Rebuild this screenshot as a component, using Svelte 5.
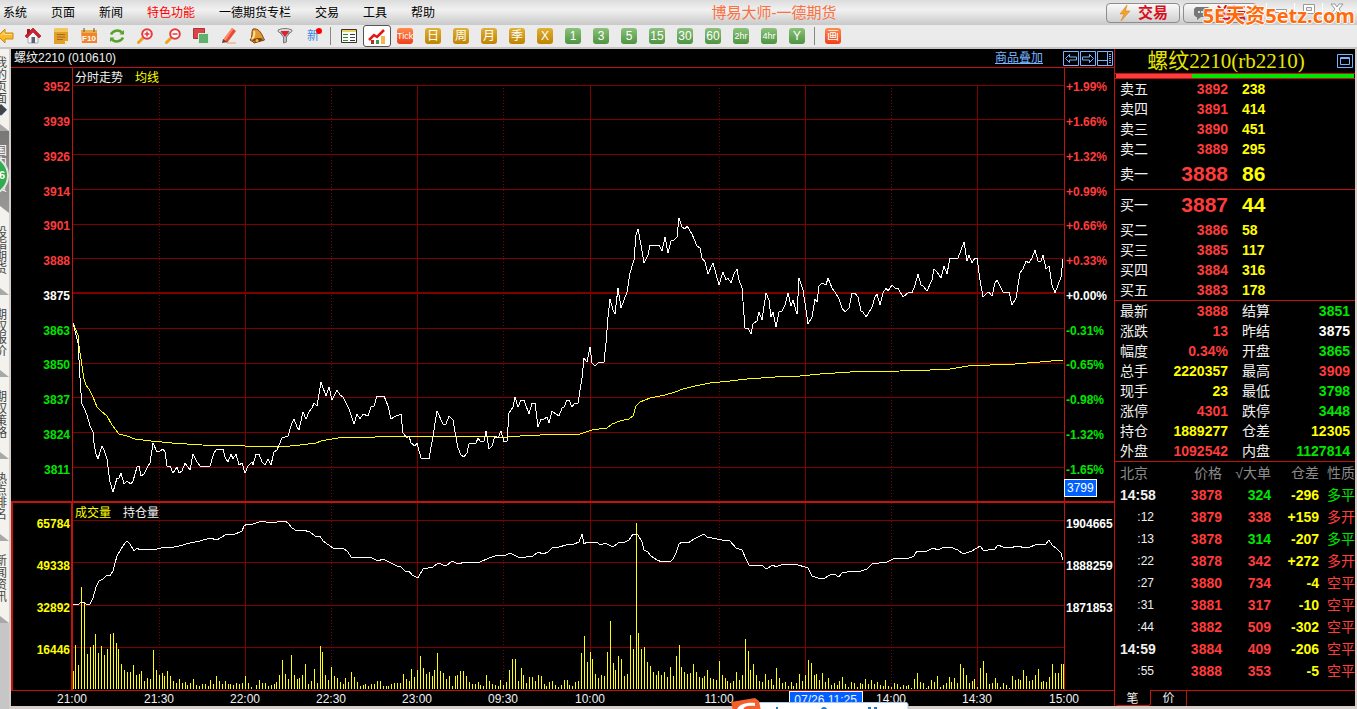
<script lang="ts">
  type Tone = 'up' | 'down' | 'vol' | 'flat';

  const menus = ['系统', '页面', '新闻', '特色功能', '一德期货专栏', '交易', '工具', '帮助'];
  const sideTabs = ['我的页面', '国内期货', '股指期货', '期权报价', '期权策略', '热点排名', '新闻资讯'];

  const tools = ['back', 'home', 'note', 'f10', 'refresh', 'zoomin', 'zoomout', 'layers', 'pen', 'bell', 'filter', 'new'];
  const periods = [
    { text: '日', kind: 'gold' },
    { text: '周', kind: 'gold' },
    { text: '月', kind: 'gold' },
    { text: '季', kind: 'gold' },
    { text: 'X', kind: 'gold' },
    { text: '1', kind: 'green' },
    { text: '3', kind: 'green' },
    { text: '5', kind: 'green' },
    { text: '15', kind: 'green' },
    { text: '30', kind: 'green' },
    { text: '60', kind: 'green' },
    { text: '2hr', kind: 'green small' },
    { text: '4hr', kind: 'green small' },
    { text: 'Y', kind: 'green' },
  ];

  const prices = ['3952', '3939', '3926', '3914', '3901', '3888', '3875', '3863', '3850', '3837', '3824', '3811'];
  const percents = ['+1.99%', '+1.66%', '+1.32%', '+0.99%', '+0.66%', '+0.33%', '+0.00%', '-0.31%', '-0.65%', '-0.98%', '-1.32%', '-1.65%'];
  const volumes = ['65784', '49338', '32892', '16446'];
  const interest = ['1904665', '1888259', '1871853', ''];

  function levelTone(i: number): Tone {
    return i < 6 ? 'up' : i > 6 ? 'down' : 'flat';
  }

  const rowLines = [85, 119, 154, 189, 224, 258, 328, 363, 397, 432, 467];
  const volLines = [520, 562, 605, 647];
  const hours = [245, 417, 590, 805, 977];
  const halves = [159, 331, 503, 719, 891];

  const left = 72;
  const span = 993;
  const times = [
    { x: 72, text: '21:00' },
    { x: 159, text: '21:30' },
    { x: 245, text: '22:00' },
    { x: 331, text: '22:30' },
    { x: 417, text: '23:00' },
    { x: 503, text: '09:30' },
    { x: 590, text: '10:00' },
    { x: 719, text: '11:00' },
    { x: 891, text: '14:00' },
    { x: 977, text: '14:30' },
    { x: 1064, text: '15:00' },
  ];

  const priceLine = `73,323 75,331 78,343 79,360 80,378 81,393 82,404 84,408 87,415 90,426 93,432 94,443 96,454 98,459 100,452
    102,446 104,450 107,459 108,467 110,482 113,492 117,478 119,478 121,473 124,484 127,481 131,484 133,481 137,467 139,466
    141,476 144,474 147,468 150,463 153,443 157,452 160,451 163,449 165,452 167,466 170,466 173,473 177,467 179,473 182,471
    185,463 190,470 193,454 197,462 201,467 210,466 214,453 217,449 223,449 225,457 228,462 231,454 233,459 236,454 239,465
    242,463 245,473 248,466 252,462 253,465 256,454 259,454 262,462 265,465 268,459 271,465 274,452 277,450 282,438 288,436
    292,423 294,419 297,427 299,430 303,412 306,419 309,412 312,408 314,403 317,406 321,382 326,396 329,387 332,400 337,390
    340,395 343,397 349,409 354,424 357,414 360,419 363,414 368,416 371,407 374,406 377,396 384,396 388,406 391,419 394,417
    401,414 403,433 407,438 409,436 411,443 415,446 417,443 421,458 423,459 426,458 429,459 433,436
    437,411 443,424 446,424 449,416 453,420 455,432 458,448 461,455 464,457 467,453 469,444 476,443 478,438 481,442 484,441
    486,431 489,449 492,446 495,436 498,438 501,431 504,442 507,441 509,413 513,407 515,397 518,407 521,400 524,400 529,414
    532,403 535,403 538,427 541,419 544,419 547,417 549,423 552,411 556,414 559,416 562,408 564,407 567,400 569,400 572,407
    575,403 578,403 582,378 584,358 587,362 590,347 592,363 595,366 598,363 604,362 606,343 608,317 610,299 613,310 615,314
    618,288 621,308 627,292 630,273 634,260 636,235 638,229 641,245 644,263 648,255 650,245 659,245 662,251 665,237 668,253
    671,241 674,240 677,237 679,218 682,227 685,229 687,226 692,234 697,246 700,248 702,258 705,262 708,274 713,263 719,285
    723,272 726,280 728,278 731,283 734,274 737,269 739,280 742,288 745,328 748,328 751,334 753,324 757,321 759,312 762,320
    766,293 769,300 771,317 773,312 776,327 779,312 782,311 785,305 788,293 791,306 793,300 797,314 799,278 803,290 805,303
    808,324 812,317 815,299 817,302 819,286 822,283 826,285 828,278 832,288 835,292 839,299 842,308 845,312 849,308 852,293
    855,293 858,297 861,311 863,312 866,317 868,314 872,307 875,297 877,294 880,305 883,293 886,288 888,291 892,285 895,288
    898,288 903,297 909,292 912,293 915,285 918,274 921,285 923,286 927,291 932,280 934,269 937,272 941,278 944,266 947,274
    950,258 958,258 961,250 964,242 967,261 969,255 972,263 975,258 977,258 980,280 983,297 987,293 989,292 992,296 995,283
    997,280 1003,292 1006,293 1009,292 1012,305 1016,298 1020,273 1023,269 1026,261 1029,263 1032,258 1035,250 1038,261
    1041,261 1043,255 1046,269 1049,266 1052,285 1055,293 1058,285 1061,277 1063,259`;

  const averageLine = `73,323 78,335 79,346 82,366 84,379 86,385 89,389 93,397 97,407 101,411 107,416 112,425 119,434 127,436
    135,439 151,441 172,443 202,445 245,446 290,446 300,445 316,443 321,441 332,439 345,437 375,437 400,436 425,436 430,437
    440,436 485,436 495,437 507,437 520,436 540,435 560,434 580,434 592,430 607,428 612,424 620,421 629,419 633,416 636,406
    640,402 650,398 665,395 675,392 683,389 695,386 710,383 730,381 747,379 775,377 800,376 820,374 850,372 900,371 930,370
    950,369 968,366 990,365 1015,364 1040,362 1063,360`;

  const interestLine = `73,605 75,604 78,605 81,602 84,602 87,605 90,604 93,598 96,587 99,581 103,579 107,575 110,576 113,571
    115,563 117,556 121,549 125,543 127,541 130,544 134,551 137,548 140,550 157,549 165,547 170,548 183,545 190,543 200,541
    210,538 217,540 227,534 233,535 242,531 244,526 247,524 253,524 262,521 270,523 285,521 288,523 292,528 297,531 303,530
    310,532 315,536 320,536 323,541 333,548 343,548 348,552 351,557 372,558 378,561 383,559 397,566 401,567 405,571 409,571
    412,575 418,578 423,569 428,568 433,567 438,563 446,566 452,561 458,564 465,562 480,562 489,558 498,555 506,555 510,553
    518,557 524,558 528,556 533,556 538,552 543,554 548,552 553,547 559,547 566,545 574,544 579,542 582,534 584,544 587,542
    596,542 601,545 605,543 613,547 618,543 625,542 629,540 633,534 638,535 642,542 644,550 648,552 651,556 657,560 662,562
    668,561 670,562 673,559 676,553 679,544 682,542 688,543 694,539 704,534 707,537 717,539 722,540 730,541 736,548 742,550
    746,559 749,565 762,565 766,569 773,565 776,567 783,564 795,564 808,568 812,576 818,578 823,579 830,575 834,574 839,577
    842,573 852,571 858,572 867,569 872,564 887,562 895,558 907,559 914,556 917,551 927,551 933,548 938,550 944,547 950,547
    958,550 963,554 972,551 980,546 984,551 988,550 995,549 998,545 1003,547 1011,548 1016,546 1027,548 1038,544 1046,544
    1049,540 1052,545 1057,549 1061,553 1063,560`;

  // one row per half hour, one value per minute
  const turnover = [
    [18, 44, 24, 102, 87, 35, 42, 44, 55, 36, 43, 34, 40, 55, 56, 46, 40, 25, 19, 17, 17, 24, 14, 15, 18, 8, 11, 10, 39, 19],
    [14, 16, 13, 18, 13, 8, 6, 10, 6, 7, 4, 6, 10, 4, 3, 5, 5, 3, 9, 5, 13, 8, 5, 8, 5, 5, 4, 6, 5, 6],
    [13, 6, 2, 0, 4, 9, 6, 6, 3, 4, 5, 7, 14, 29, 15, 10, 34, 14, 10, 11, 14, 25, 5, 8, 20, 6, 43, 37, 14, 9],
    [22, 13, 11, 7, 5, 11, 7, 17, 12, 7, 3, 4, 5, 3, 5, 5, 8, 8, 3, 3, 3, 5, 6, 6, 6, 15, 10, 8, 20, 12],
    [19, 33, 21, 15, 17, 13, 19, 36, 18, 16, 10, 13, 3, 13, 14, 18, 18, 13, 7, 5, 5, 7, 4, 3, 14, 8, 5, 4, 3, 9],
    [4, 7, 19, 30, 30, 8, 21, 14, 6, 12, 12, 8, 14, 13, 5, 3, 7, 8, 4, 2, 4, 9, 9, 4, 3, 7, 8, 36, 53, 27],
    [37, 30, 15, 11, 14, 13, 37, 68, 26, 19, 33, 30, 13, 15, 54, 40, 166, 56, 40, 42, 27, 23, 17, 14, 18, 14, 17, 12, 22, 13],
    [33, 44, 22, 17, 15, 16, 25, 17, 12, 11, 13, 19, 11, 10, 9, 28, 14, 11, 8, 6, 8, 17, 9, 14, 50, 38, 19, 25, 14, 8],
    [7, 15, 9, 10, 4, 21, 11, 6, 7, 3, 7, 3, 6, 15, 8, 14, 29, 26, 14, 15, 9, 16, 7, 11, 4, 6, 4, 8, 12, 5],
    [2, 7, 6, 2, 6, 5, 10, 5, 9, 5, 7, 4, 3, 9, 3, 2, 6, 5, 2, 4, 3, 4, 1, 10, 16, 7, 6, 1, 3, 9],
    [7, 13, 2, 4, 6, 12, 7, 11, 6, 25, 21, 14, 6, 8, 10, 2, 21, 28, 16, 5, 6, 11, 6, 2, 6, 4, 1, 13, 9, 10],
    [9, 19, 13, 8, 9, 14, 20, 7, 8, 7, 12, 25, 16, 16, 25, 25],
  ];
  const minute = 991 / 345;
  const bars = turnover.flatMap((row, r) =>
    row.map((h, i) => ({ x: Math.min(1063, Math.floor(73 + (r * 30 + i) * minute)), h }))
  );

  const asks = [
    ['卖五', '3892', '238'],
    ['卖四', '3891', '414'],
    ['卖三', '3890', '451'],
    ['卖二', '3889', '295'],
    ['卖一', '3888', '86'],
  ];
  const bids = [
    ['买一', '3887', '44'],
    ['买二', '3886', '58'],
    ['买三', '3885', '117'],
    ['买四', '3884', '316'],
    ['买五', '3883', '178'],
  ];

  const stats: [string, string, Tone, string, string, Tone][] = [
    ['最新', '3888', 'up', '结算', '3851', 'down'],
    ['涨跌', '13', 'up', '昨结', '3875', 'flat'],
    ['幅度', '0.34%', 'up', '开盘', '3865', 'down'],
    ['总手', '2220357', 'vol', '最高', '3909', 'up'],
    ['现手', '23', 'vol', '最低', '3798', 'down'],
    ['涨停', '4301', 'up', '跌停', '3448', 'down'],
    ['持仓', '1889277', 'vol', '仓差', '12305', 'vol'],
    ['外盘', '1092542', 'up', '内盘', '1127814', 'down'],
  ];

  const ticks: [string, string, string, string, string, Tone][] = [
    ['14:58', '3878', '324', '-296', '多平', 'down'],
    [':12', '3879', '338', '+159', '多开', 'up'],
    [':13', '3878', '314', '-207', '多平', 'down'],
    [':22', '3878', '342', '+272', '多开', 'up'],
    [':27', '3880', '734', '-4', '空平', 'up'],
    [':31', '3881', '317', '-10', '空平', 'up'],
    [':44', '3882', '509', '-302', '空平', 'up'],
    ['14:59', '3884', '409', '-206', '空平', 'up'],
    [':55', '3888', '353', '-5', '空平', 'up'],
  ];
</script>

{#snippet book(rows: string[][], label: string)}
  <table class="book" aria-label={label}>
    <tbody>
      {#each rows as [name, price, lots]}
        <tr class:best={name.endsWith('一')}>
          <th scope="row">{name}</th>
          <td class="up num">{price}</td>
          <td class="vol lots">{lots}</td>
        </tr>
      {/each}
    </tbody>
  </table>
{/snippet}

{#snippet toolIcon(name: string)}
  <svg width="16" height="16" viewBox="0 0 16 16" aria-hidden="true">
    {#if name === 'back'}
      <path d="M0 8 7 1v4h8v6H7v4z" fill="#fbb927" stroke="#c98a12" />
      <path d="M3 7.500 6 4.500v2h8" fill="none" stroke="#ffe08a" />
    {:else if name === 'home'}
      <path d="M3 8v7h10V8L8 3z" fill="#f4f4f6" stroke="#a9a9b4" />
      <path d="M0 8 8 0 16 8l-2 2-6-6-6 6z" fill="#d3202c" stroke="#8e1018" stroke-width=".6" />
      <path d="M2 1h3v3L2 7z" fill="#a51822" />
      <path d="M6.500 9h3.500v6H6.500z" fill="#5b6372" />
    {:else if name === 'note'}
      <path d="M2 0h13v13l-3 3H1V3z" fill="#e0a02c" />
      <path d="M2 0h13v4H1z" fill="#f3c65e" />
      <path d="M4 6.500h8M4 9h8M4 11.500h6" stroke="#a9681a" />
      <path d="m12 16 3-3h-3z" fill="#fff2c8" />
    {:else if name === 'f10'}
      <path d="M0 2h16v13H1z" fill="#f0832c" />
      <path d="M0 2h16v3H0z" fill="#e3b24a" />
      <path d="M3 0v4M13 0v4" stroke="#7b4a1a" />
      <text x="8" y="13" text-anchor="middle" font-size="8" font-weight="700" fill="#fff">F10</text>
    {:else if name === 'refresh'}
      <path d="M2 6.500C4 2 10 1.500 13 4.500" fill="none" stroke="#57a329" stroke-width="2.500" />
      <path d="M10.500 6.500H15V2z" fill="#57a329" />
      <path d="M14 9.500c-2 4.500-8 5-11 2" fill="none" stroke="#57a329" stroke-width="2.500" />
      <path d="M5.500 9.500H1V14z" fill="#57a329" />
    {:else if name === 'zoomin' || name === 'zoomout'}
      <path d="m6.500 9.500-5 5" stroke="#f0a020" stroke-width="3" stroke-linecap="round" />
      <circle cx="10" cy="6" r="4.800" fill="#fff" stroke="#e8393c" stroke-width="2" />
      <path d={name === 'zoomin' ? 'M7.500 6h5M10 3.500v5' : 'M7.500 6h5'} stroke="#e8393c" stroke-width="1.500" />
    {:else if name === 'layers'}
      <path d="M.5.500h11v10H.5z" fill="#dc4448" stroke="#a93236" />
      <path d="M5.500 5.500h10v10h-10z" fill="#62b070" stroke="#d8efda" />
    {:else if name === 'pen'}
      <path d="m2 12 9-12 4 3-9 12z" fill="#e84a34" />
      <path d="m2 12 9-12 1.500 1L4 13.500z" fill="#ff8a6a" />
      <path d="m1 15 1-4 4 3z" fill="#664032" />
      <path d="M6 15h9" stroke="#e8a060" />
    {:else if name === 'bell'}
      <path d="M4 1c5-1 8 3 10 8l1.500 3L5 15c-1-2-3-2-4-3C4 9 2 4 4 1z" fill="#e09a35" stroke="#7c4012" />
      <path d="M5 3c1 4 0 6-2 8" fill="none" stroke="#ffe08c" stroke-width="2" />
      <path d="M3 12c3-2 8-3 11-1-2 3-8 4-11 1z" fill="#7c4012" />
      <circle cx="8" cy="12.500" r="1.500" fill="#f8c040" />
    {:else if name === 'filter'}
      <path d="m1 2 5.500 7v6l3-1V9L15 2z" fill="#b9bcc2" stroke="#777b82" />
      <ellipse cx="8" cy="3" rx="7" ry="2.500" fill="#d8dadd" stroke="#777b82" />
      <path d="M3.500 3h9L8 9z" fill="#e32227" />
    {/if}
  </svg>
{/snippet}

<div class="app">
  <header class="menubar">
    <nav class="menus">
      {#each menus as item}
        <button class="menu" class:hot={item === '特色功能'}>{item}</button>
      {/each}
    </nav>
    <h1>博易大师-一德期货</h1>
    <div class="actions">
      <button class="action">
        <svg width="14" height="16" viewBox="0 0 14 16" aria-hidden="true">
          <path d="M9 0 2 9h4l-3 7 9-10H7.500z" fill="#f3a32c" stroke="#d07a14" stroke-width=".5" />
        </svg>
        交易
      </button>
      <button class="action">
        <svg width="16" height="14" viewBox="0 0 16 14" aria-hidden="true">
          <path d="M2 1h12l2 2v6l-2 2H7l-4 3v-3H2L0 9V3z" fill="#777" />
          <path d="M4 6h2M7 6h2M10 6h2" stroke="#ddd" stroke-width="2" />
        </svg>
        论坛
      </button>
      <div class="window-buttons">
        <button aria-label="最小化"><svg width="14" height="14" viewBox="0 0 14 14"><path d="M1.500 6.500h11v3h-11z" /></svg></button>
        <button aria-label="最大化"><svg width="14" height="14" viewBox="0 0 14 14"><path d="M1.500 1.500h11v9h-11zM4.500 4.500h5v3h-5z" /></svg></button>
        <button aria-label="关闭"><svg width="14" height="14" viewBox="0 0 14 14"><path d="M1 1h4l2 3 2-3h4L9 6l4 5H9L7 8l-2 3H1l4-5z" /></svg></button>
      </div>
    </div>
    <div class="watermark">5E天资5etz.com</div>
  </header>

  <div class="toolbar">
    {#each tools as name}
      <button class="tool" aria-label={name}>
        {#if name === 'new'}
          <span class="new">新</span>
        {:else}
          {@render toolIcon(name)}
        {/if}
      </button>
    {/each}
    <span class="sep"></span>
    <button class="tool" aria-label="报价">
      <svg width="16" height="16" viewBox="0 0 16 16">
        <path d="M.5 1.500h15v13H.5z" fill="#fffef4" stroke="#333" />
        <path d="M1 3h14" stroke="#f0d060" stroke-width="2" />
        <path d="M2 6.500h5M2 9.500h5M2 12.500h5" stroke="#2c8c3c" />
        <path d="M9 6.500h5M9 12.500h5" stroke="#333" />
        <path d="M9 9.500h5" stroke="#2846c0" />
      </svg>
    </button>
    <button class="tool active" aria-label="分时">
      <svg width="18" height="17" viewBox="0 0 18 17">
        <path d="M3 12h3v4H3z" fill="#b03028" />
        <path d="M8 12h3v4H8z" fill="#3a9850" />
        <path d="M13 8h4v8h-4z" fill="#f0b850" />
        <path d="m1 12 5-5 3 2 7-7" fill="none" stroke="#e01818" stroke-width="2.500" />
      </svg>
    </button>
    <button class="tool"><span class="chip red small">Tick</span></button>
    {#each periods as p}
      <button class="tool"><span class="chip {p.kind}">{p.text}</span></button>
    {/each}
    <span class="sep"></span>
    <button class="tool"><span class="chip red">画</span></button>
  </div>

  <div class="workspace">
    <aside class="side">
      {#each sideTabs as tab, i}
        <button class="side-tab" class:current={i === 1}><span>{tab}{i === 0 ? '◆' : ''}</span></button>
      {/each}
      <div class="badge">6</div>
    </aside>

    <main class="chart">
      <div class="chart-head">
        <span>螺纹2210 (010610)</span>
        <a href="#overlay">商品叠加</a>
        <div class="head-icons">
          <button aria-label="左移"><svg width="16" height="15" viewBox="0 0 16 15"><path d="M.5.500h15v14H.5zM2.500 7.500l4-4v2.500h7v3h-7v2.500z" /></svg></button>
          <button aria-label="右移"><svg width="16" height="15" viewBox="0 0 16 15"><path d="M.5.500h15v14H.5zM13.500 7.500l-4-4v2.500h-7v3h7v2.500z" /></svg></button>
          <button aria-label="布局"><svg width="16" height="15" viewBox="0 0 16 15"><path d="M.5.500h15v14H.5zM.5 9.500h10M10.500 1v13M12 3.500h2M12 5.500h2M12 7.500h2M12 9.500h2M12 11.500h2" /></svg></button>
        </div>
      </div>

      <section class="pane price-pane">
        <div class="scale levels">
          {#each prices as p, i}<span class={levelTone(i)}>{p}</span>{/each}
        </div>
        <div class="plot">
          <svg viewBox="72 68 993 433" preserveAspectRatio="none" shape-rendering="crispEdges">
            <g class="grid">
              {#each rowLines as y}<path d="M73 {y}.5H1064" />{/each}
              <path d="M73 293H1064" stroke-width="2" />
              {#each hours as x}<path d="M{x}.5 85V501" />{/each}
              {#each halves as x}<path d="M{x}.5 85V501" stroke-dasharray="1 2" />{/each}
            </g>
            <path class="frame" d="M72 68h1v433h-1zM1064 68h1v433h-1z" />
            <polyline class="average" points={averageLine} />
            <polyline class="line" points={priceLine} />
          </svg>
          <div class="legend"><span>分时走势</span><span class="vol">均线</span></div>
        </div>
        <div class="scale levels right">
          {#each percents as p, i}<span class={levelTone(i)}>{p}</span>{/each}
          <output class="tag">3799</output>
        </div>
      </section>

      <section class="pane volume-pane">
        <div class="scale volumes">
          {#each volumes as v}<span class="vol">{v}</span>{/each}
        </div>
        <div class="plot">
          <svg viewBox="72 503 993 187" preserveAspectRatio="none" shape-rendering="crispEdges">
            <g class="grid">
              {#each volLines as y}<path d="M73 {y}.5H1064" />{/each}
              {#each hours as x}<path d="M{x}.5 503V690" />{/each}
              {#each halves as x}<path d="M{x}.5 503V690" stroke-dasharray="1 2" />{/each}
            </g>
            <path class="frame" d="M72 503h1v187h-1zM1064 503h1v187h-1z" />
            {#each bars as b}<rect x={b.x} y={689 - b.h} width="1" height={b.h} fill="#ff0" />{/each}
            <polyline class="line" points={interestLine} />
          </svg>
          <div class="legend"><span class="vol">成交量</span><span>持仓量</span></div>
        </div>
        <div class="scale volumes right">
          {#each interest as v}<span class="flat">{v}</span>{/each}
        </div>
      </section>

      <div class="time-axis">
        <svg class="times">
          {#each times as t}
            <text x="{((t.x - left) / span) * 100}%" y="12" text-anchor="middle">{t.text}</text>
          {/each}
        </svg>
        <span class="cursor-time">07/26 11:25</span>
      </div>
    </main>

    <aside class="quote">
      <div class="quote-title">
        <h2>螺纹2210(rb2210)</h2>
        <button aria-label="窗口"><svg width="16" height="14" viewBox="0 0 16 14"><path d="M.5.500h15v13H.5z" /><path d="M3.500 3.500h9v7h-9zM3.500 4.500h9" /></svg></button>
      </div>
      <div class="ratio"><i></i></div>
      {@render book(asks, '卖盘')}
      {@render book(bids, '买盘')}
      <table class="stats">
        <tbody>
          {#each stats as [a, av, at, b, bv, bt]}
            <tr>
              <th scope="row">{a}</th>
              <td class="num {at}">{av}</td>
              <th scope="row" class="second">{b}</th>
              <td class="num {bt}">{bv}</td>
            </tr>
          {/each}
        </tbody>
      </table>
      <table class="ticks">
        <thead>
          <tr><th>北京</th><th>价格</th><th>√大单</th><th>仓差</th><th>性质</th></tr>
        </thead>
        <tbody>
          {#each ticks as [time, price, lots, diff, nature, tone]}
            <tr>
              <td class:second-only={time.startsWith(':')}>{time}</td>
              <td class="up">{price}</td>
              <td class={tone}>{lots}</td>
              <td class="vol">{diff}</td>
              <td class="nature {tone}">{nature}</td>
            </tr>
          {/each}
        </tbody>
      </table>
      <div class="quote-tabs">
        <button class="current">笔</button>
        <button>价</button>
      </div>
    </aside>
  </div>

  <div class="ime">
    <svg width="178" height="11" viewBox="0 0 178 11" aria-hidden="true">
      <path d="M27 4.500h148q2 0 2 2V12H27z" fill="#fff" stroke="#a9c8ee" />
      <path d="M0 4 24 0l4 3 2 10H2z" fill="#f4602c" />
      <path d="M6 12c1-5 8-8 18-7v3c-7-1-11 0-12 4z" fill="#fff" />
      <path d="M45 9h2v2h-2zM137 9h3v2h-3zM143 9h3v2h-3z" fill="#1878d0" />
      <circle cx="93" cy="12" r="3" fill="#1878d0" />
    </svg>
  </div>
</div>

<style>
  :global(body) {
    margin: 0;
    background: #d4cdc9;
  }
  .app {
    --frame: #c4120c;
    --grid: #800000;
    --red: #ff3c3c;
    --green: #00e600;
    --blue: #78b4ff;
    position: relative;
    display: flex;
    flex-direction: column;
    min-height: 100vh;
    overflow: hidden;
    font: 12px/16px 'Liberation Sans', 'Noto Sans CJK SC', sans-serif;
    color: #f0f0f0;
  }
  button {
    padding: 0;
    border: 0;
    background: none;
    font: inherit;
    color: inherit;
  }
  svg {
    display: block;
  }
  .up {
    color: var(--red);
  }
  .down {
    color: var(--green);
  }
  .vol {
    color: #ff0;
  }
  .flat {
    color: #fff;
  }

  .menubar {
    position: relative;
    display: grid;
    grid-template-columns: 1fr auto 1fr;
    align-items: center;
    height: 25px;
    background: linear-gradient(#dcdcdc, #f1f1f1 40%, #c9c9c9);
    color: #000;
  }
  .menus {
    display: flex;
    gap: 24px;
    padding-left: 3px;
  }
  .menu {
    white-space: nowrap;
  }
  .menu.hot {
    color: #f00;
  }
  h1 {
    margin: 0;
    padding-left: 191px;
    font-size: 15px;
    font-weight: 400;
    line-height: 24px;
    color: #fa7040;
  }
  .actions {
    display: flex;
    justify-content: flex-end;
    gap: 3px;
    padding-right: 7px;
  }
  .action {
    display: flex;
    justify-content: center;
    align-items: center;
    gap: 6px;
    width: 74px;
    height: 20px;
    border: 1px solid #8d8d8d;
    border-radius: 4px;
    background: linear-gradient(#fafafa, #cfcfcf);
    font-size: 15px;
    font-weight: 700;
    color: #d8101c;
  }
  .window-buttons {
    display: flex;
    margin-left: 6px;
  }
  .window-buttons button {
    width: 28px;
    padding: 0 0 6px 7px;
    border-left: 1px solid #fff;
  }
  .window-buttons path {
    fill: #fff;
    fill-rule: evenodd;
    stroke: #999;
  }
  .watermark {
    position: absolute;
    top: 3px;
    right: 2px;
    font: 700 20px/26px 'Open Sans', 'Noto Sans CJK SC', sans-serif;
    color: #ff6a0a;
    text-shadow: 1px 0 #fff, -1px 0 #fff, 0 1px #fff, 0 -1px #fff;
  }

  .toolbar {
    display: flex;
    align-items: center;
    box-sizing: border-box;
    height: 24px;
    padding-right: 8px;
    border-bottom: 2px solid #cbc4c4;
    background: #ebebeb;
  }
  .tool {
    display: flex;
    justify-content: center;
    align-items: center;
    flex: none;
    width: 28px;
    height: 22px;
  }
  .tool:first-child {
    justify-content: flex-start;
    width: 19px;
    overflow: hidden;
  }
  .tool:first-child svg {
    margin-left: -2px;
  }
  .tool.active {
    box-sizing: border-box;
    border: 1px solid #555;
    border-radius: 3px;
    background: #fff;
  }
  .sep {
    box-sizing: border-box;
    width: 8px;
    height: 18px;
    border-left: 3px solid #ebebeb;
    background: linear-gradient(90deg, #888 1px, transparent 1px);
  }
  .new {
    position: relative;
    color: #3c8ae6;
  }
  .new::after {
    content: '';
    position: absolute;
    top: 0;
    right: -3px;
    width: 6px;
    height: 6px;
    border-radius: 50%;
    background: #f00;
  }
  .chip {
    width: 16px;
    height: 16px;
    border-radius: 3px;
    line-height: 16px;
    text-align: center;
    color: #fff;
    overflow: hidden;
  }
  .chip.gold {
    background: linear-gradient(#dfb136, #bf8300);
  }
  .chip.green {
    background: linear-gradient(#8cc27c, #4d9440);
  }
  .chip.red {
    background: linear-gradient(#ff8a4c, #f0401c);
  }
  .chip.small {
    font-size: 9px;
  }

  .workspace {
    display: flex;
    flex: 1;
    padding-right: 2px;
  }
  .side {
    position: relative;
    flex: none;
    width: 9px;
    border-right: 2px solid #d5cdc9;
    background: #c6c6c6;
    overflow: hidden;
  }
  .side-tab {
    position: relative;
    display: flex;
    align-items: center;
    width: 9px;
    height: 82px;
    background: #f3f2ec;
    color: #444;
  }
  .side-tab::after {
    content: '';
    position: absolute;
    left: 0;
    bottom: 0;
    width: 9px;
    height: 7px;
    background: #a8a8a8;
    clip-path: polygon(0 0, 100% 100%, 0 100%);
  }
  .side-tab span {
    width: 12px;
    margin: 0 0 6px -5px;
    flex: none;
    line-height: 12px;
    word-break: break-all;
  }
  .side-tab.current {
    background: linear-gradient(#777, #999);
    color: #fff;
  }
  .side-tab.current::after {
    background: #f3f2ec;
  }
  .badge {
    position: absolute;
    top: 106px;
    left: -32px;
    box-sizing: border-box;
    width: 41px;
    height: 41px;
    border: 2px solid #e4e4e4;
    border-radius: 50%;
    background: #32ac50;
    font-weight: 700;
    font-size: 11px;
    line-height: 37px;
    text-align: right;
    color: #fff;
    padding-right: 2px;
  }

  .chart {
    display: flex;
    flex-direction: column;
    flex: 1;
    min-width: 0;
    margin-bottom: 3px;
    background: #000;
  }
  .chart-head {
    display: flex;
    align-items: center;
    gap: 20px;
    height: 18px;
    padding-left: 3px;
    border-bottom: 1px solid var(--frame);
  }
  .chart-head a {
    margin-left: auto;
    color: var(--blue);
  }
  .head-icons {
    display: flex;
    gap: 1px;
    padding-right: 1px;
  }
  .head-icons path,
  .quote-title path {
    fill: none;
    stroke: var(--blue);
  }
  .pane {
    display: grid;
    grid-template-columns: 61px minmax(0, 1fr) 49px;
  }
  .price-pane {
    flex: 433;
  }
  .volume-pane {
    flex: 187;
    border: solid var(--frame);
    border-width: 2px 0 1px;
    background: linear-gradient(var(--frame), var(--frame)) 0 0 / 2px 100% no-repeat;
  }
  .plot {
    position: relative;
    min-height: 0;
  }
  .plot svg {
    position: absolute;
    inset: 0;
    width: 100%;
    height: 100%;
  }
  .grid path {
    stroke: var(--grid);
  }
  .frame {
    fill: var(--frame);
  }
  .line,
  .average {
    fill: none;
    stroke: #fff;
  }
  .average {
    stroke: #ff0;
  }
  .legend {
    position: absolute;
    top: 2px;
    left: 3px;
    display: flex;
    gap: 12px;
  }
  .scale {
    position: relative;
    display: grid;
    grid-auto-rows: 1fr;
    align-items: center;
    padding-right: 2px;
    font-weight: 700;
    text-align: right;
  }
  .scale.right {
    padding-right: 0;
    padding-left: 1px;
    text-align: left;
  }
  .levels {
    padding-top: 2px;
    padding-bottom: 14px;
  }
  .volumes {
    padding-bottom: 19px;
  }
  .volume-pane .scale:first-child {
    border-right: 1px solid var(--frame);
    padding-right: 1px;
  }
  .tag {
    position: absolute;
    left: -1px;
    bottom: 4px;
    padding: 0 2px;
    border: 1px solid #fff;
    background: #0060ff;
    font-weight: 400;
    color: #fff;
  }
  .time-axis {
    position: relative;
    height: 15px;
    padding: 0 49px 0 61px;
  }
  .times {
    width: 100%;
    height: 15px;
    overflow: visible;
    fill: #f0f0f0;
  }
  .cursor-time {
    position: absolute;
    left: 70.500%;
    top: 0;
    box-sizing: border-box;
    width: 74px;
    height: 15px;
    border: 1px solid #fff;
    background: #0060ff;
    text-align: center;
    white-space: nowrap;
    overflow: hidden;
  }

  .quote {
    display: flex;
    flex-direction: column;
    flex: none;
    width: 240px;
    margin-bottom: 3px;
    border-left: 1px solid var(--frame);
    background: #000;
    font-size: 14px;
  }
  .quote-title {
    display: flex;
    align-items: center;
    height: 24px;
    padding-right: 2px;
    border-bottom: 1px solid var(--frame);
  }
  h2 {
    flex: 1;
    margin: 0;
    font: 400 21px/24px 'Liberation Serif', 'Noto Sans CJK SC', serif;
    text-align: center;
    color: #e6e600;
  }
  .ratio {
    height: 4px;
    padding: 0 1px;
    border-bottom: 1px solid var(--frame);
    background: var(--green) content-box;
  }
  .ratio i {
    display: block;
    width: 32%;
    height: 4px;
    background: var(--red);
  }
  table {
    width: 100%;
    table-layout: fixed;
    border-collapse: separate;
    border-spacing: 0;
  }
  th,
  td {
    padding: 0;
    line-height: 20px;
    font-weight: 700;
    white-space: nowrap;
  }
  th {
    width: 40px;
    box-sizing: border-box;
    padding-left: 5px;
    font-weight: 400;
    text-align: left;
  }
  .num {
    width: 73px;
    text-align: right;
  }
  .book,
  .stats {
    border-bottom: 1px solid var(--frame);
  }
  .lots {
    padding-left: 14px;
  }
  .best td {
    font-size: 21px;
    line-height: 30px;
  }
  .stats th.second {
    width: 54px;
    padding-left: 14px;
  }
  .stats td:last-child {
    width: auto;
    padding-right: 5px;
  }
  .ticks th,
  .ticks td {
    box-sizing: border-box;
    line-height: 22px;
    text-align: right;
  }
  .ticks th {
    padding-left: 0;
    color: #8a8a8a;
  }
  .ticks th:first-child,
  .ticks td:first-child {
    width: 45px;
    padding-left: 5px;
    text-align: left;
  }
  .ticks th:nth-child(2) {
    width: 62px;
  }
  .ticks th:nth-child(3) {
    width: 49px;
  }
  .ticks th:nth-child(4) {
    width: 48px;
  }
  .ticks th:nth-child(5) {
    width: 36px;
  }
  .ticks td.second-only {
    padding-right: 6px;
    font-size: 12px;
    font-weight: 400;
    text-align: right;
  }
  .ticks td.nature {
    font-weight: 400;
  }
  .quote-tabs {
    display: flex;
    height: 15px;
    margin-top: auto;
    border-top: 1px solid var(--frame);
  }
  .quote-tabs button {
    width: 36px;
    border-right: 1px solid var(--frame);
    font-size: 12px;
    line-height: 15px;
  }
  .quote-tabs .current {
    margin-top: -1px;
    padding-top: 2px;
    border-bottom: 1px solid var(--frame);
    border-radius: 0 0 3px 3px;
    background: #000;
  }
  .ime {
    position: absolute;
    bottom: 0;
    left: 54%;
    margin-left: -2px;
  }
</style>
